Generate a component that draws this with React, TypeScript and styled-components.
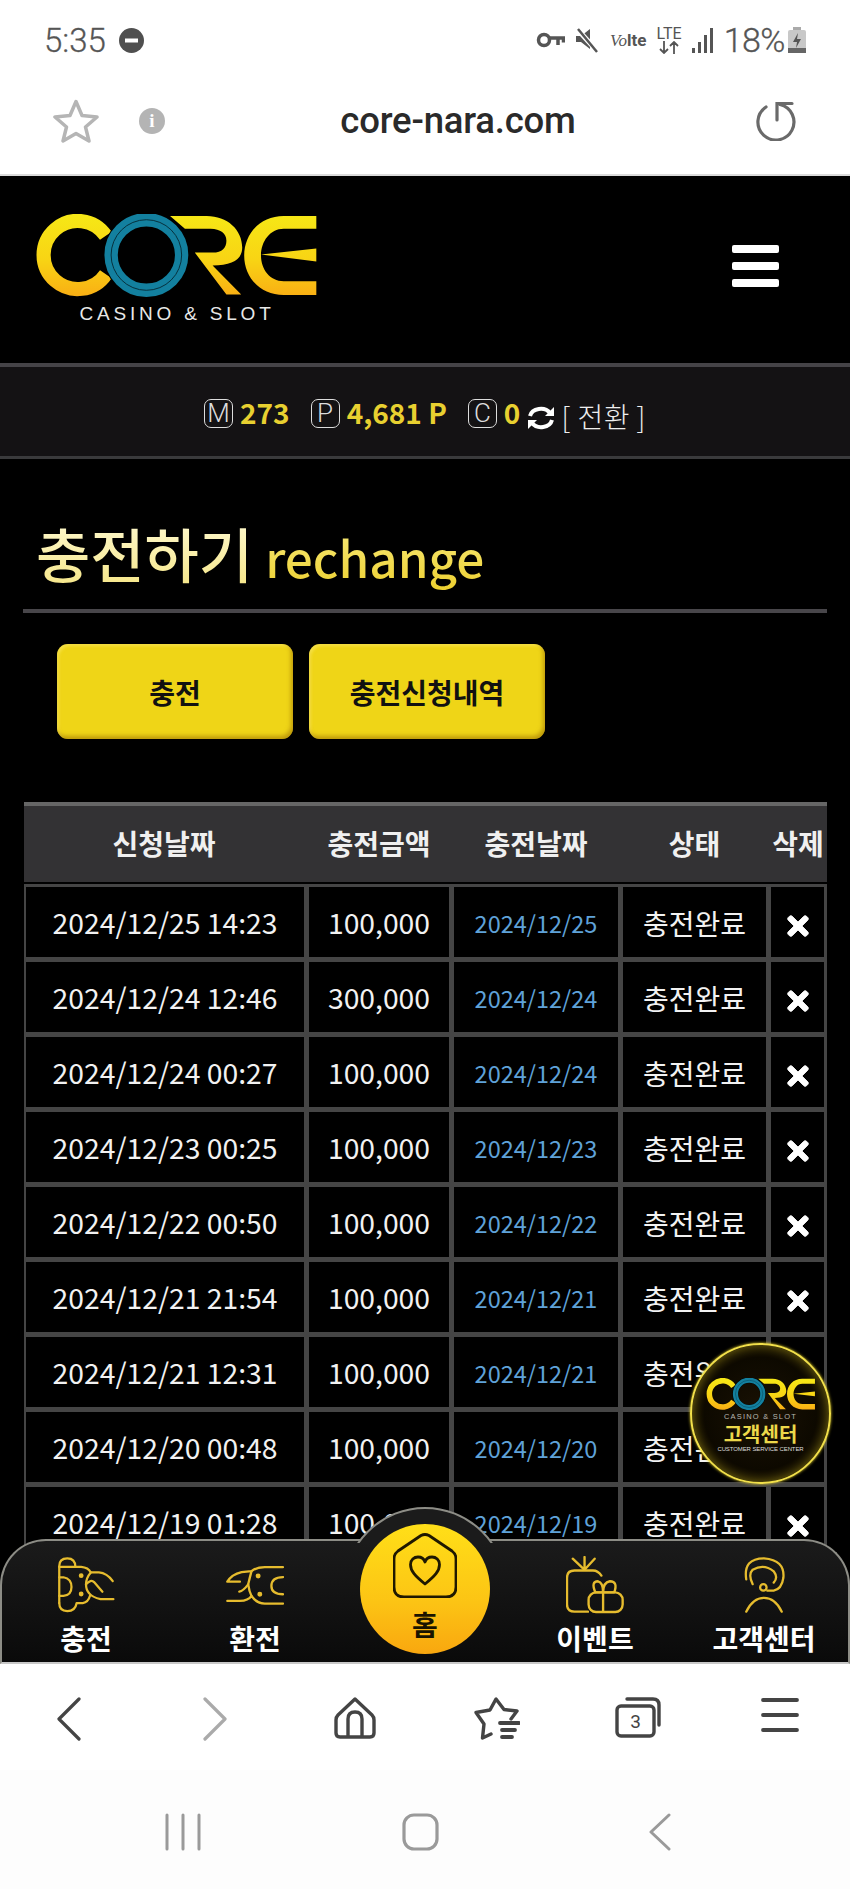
import React from "react";
import styled, { createGlobalStyle } from "styled-components";
import { FaTimes } from "react-icons/fa";

const Global = createGlobalStyle`
  html, body { margin: 0; padding: 0; background: #fff; }
  * { box-sizing: border-box; }
`;

const KR = `"Noto Sans CJK KR", "Noto Sans", sans-serif`;

const Screen = styled.div`
  width: 850px;
  height: 1889px;
  display: flex;
  flex-direction: column;
  overflow: hidden;
  font-family: ${KR};
  background: #fff;
`;

/* ---------- Android status bar ---------- */
const StatusBar = styled.div`
  height: 78px;
  flex: none;
  display: flex;
  align-items: center;
  justify-content: space-between;
  padding: 2px 44px 0 44px;
  color: #555;
  font-family: Roboto, sans-serif;
`;
const StatusGroup = styled.div`
  display: flex;
  align-items: center;
  gap: ${(p: { $gap?: number }) => p.$gap ?? 10}px;
`;
const Clock = styled.span`
  font-size: 33px;
  font-weight: 300;
  -webkit-text-stroke: 0.3px #555;
`;
const Battery = styled.span`
  font-size: 34px;
  font-weight: 300;
  letter-spacing: -0.5px;
  -webkit-text-stroke: 0.3px #555;
`;
const Volte = styled.span`
  font-size: 17px;
  font-family: "Liberation Serif", serif;
  font-style: italic;
  color: #555;
  white-space: nowrap;
  b { font-family: Roboto, sans-serif; font-style: normal; font-size: 17px; }
`;
const LteStack = styled.span`
  display: flex;
  flex-direction: column;
  align-items: center;
  font-size: 16px;
  line-height: 15px;
  color: #555;
  svg { display: block; }
`;

/* ---------- Browser address bar ---------- */
const AddressBar = styled.div`
  height: 98px;
  flex: none;
  display: flex;
  align-items: center;
  padding: 0 54px 10px 53px;
  border-bottom: 2px solid #dcdcdc;
`;
const InfoDot = styled.span`
  margin-left: 40px;
  width: 26px;
  height: 26px;
  border-radius: 50%;
  background: #b4b4b4;
  color: #fff;
  font: 700 19px/26px "Liberation Serif", serif;
  text-align: center;
`;
const Url = styled.div`
  flex: 1;
  text-align: center;
  font: 500 36.5px/1 Roboto, sans-serif;
  letter-spacing: -0.2px;
  color: #2a2a2a;
  padding-right: 2px;
`;

/* ---------- Site ---------- */
const Site = styled.div`
  flex: 1;
  position: relative;
  background: #000;
  overflow: hidden;
  min-height: 0;
`;
const SiteHeader = styled.header`
  height: 187px;
  display: flex;
  justify-content: space-between;
  align-items: flex-start;
  padding: 38px 71px 0 35px;
`;
const Brand = styled.div`
  display: flex;
  flex-direction: column;
  align-items: center;
  width: 284px;
`;
const BrandSub = styled.div`
  font: 400 ${(p: { $size: number; $space: number }) => p.$size}px/1 "Liberation Sans", sans-serif;
  letter-spacing: ${(p) => p.$space}px;
  color: ${(p) => (p.$size > 10 ? "#e8e8e8" : "#b8b8b0")};
  white-space: nowrap;
  margin-top: ${(p) => (p.$size > 10 ? 7 : 3)}px;
`;
const Burger = styled.div`
  margin-top: 31px;
  width: 47px;
  display: flex;
  flex-direction: column;
  gap: 9px;
  span { height: 8px; border-radius: 2px; background: #fff; }
`;
const BalanceBar = styled.div`
  height: 96px;
  border-top: 4px solid #454347;
  border-bottom: 3px solid #3a3a3c;
  background: #141214;
  display: flex;
  align-items: center;
  justify-content: center;
  padding-top: 3px;
`;
const Badge = styled.span`
  width: 29px;
  height: 29px;
  border: 1.5px solid #ddd;
  border-radius: 7px;
  color: #ddd;
  font: 300 26px/26px Roboto, sans-serif;
  text-align: center;
  flex: none;
  margin-left: ${(p: { $left: number }) => p.$left}px;
`;
const Amount = styled.span`
  font-size: 28px;
  font-weight: 700;
  line-height: 1;
  color: #e8d030;
  margin-left: 7px;
  white-space: nowrap;
  position: relative;
  top: -1px;
`;
const Swap = styled.span`
  display: flex;
  margin-left: 7px;
  margin-top: 9px;
`;
const SwapLabel = styled.span`
  font-size: 28px;
  font-weight: 300;
  line-height: 1;
  letter-spacing: 0.5px;
  color: #eee;
  margin-left: 6px;
  margin-top: 5px;
  white-space: pre;
`;
const PageTitle = styled.div`
  margin: 0 23px;
  height: 154px;
  padding: 51px 0 0 13px;
  border-bottom: 4px solid #48464a;
  display: flex;
  align-items: baseline;
  gap: 12px;
`;
const TitleKo = styled.span`
  font-size: 59px;
  font-weight: 500;
  line-height: 1.45;
  background: linear-gradient(180deg, #fffbd8, #f5e480);
  -webkit-background-clip: text;
  background-clip: text;
  color: transparent;
`;
const TitleEn = styled.span`
  font-size: 49.5px;
  font-weight: 500;
  line-height: 1.45;
  background: linear-gradient(180deg, #f8ec80, #edcf2c);
  -webkit-background-clip: text;
  background-clip: text;
  color: transparent;
`;
const Tabs = styled.div`
  display: flex;
  gap: 16px;
  padding: 31px 0 0 57px;
  height: 189px;
`;
const TabButton = styled.button`
  width: 236px;
  height: 95px;
  border: none;
  border-radius: 11px;
  background: #efd517;
  box-shadow: inset -2px -3px 4px rgba(150, 105, 0, 0.55), inset 2px 2px 3px rgba(255, 240, 120, 0.5);
  font: 700 28px/1 ${KR};
  color: #111;
`;

const TableWrap = styled.div`
  margin: 0 23px 0 24px;
  width: 803px;
`;
const HeadRow = styled.div`
  display: grid;
  grid-template-columns: 280px 140px 164px 143px 1fr;
  column-gap: 5px;
  height: 80px;
  background: #333234;
  border-top: 4px solid #666;
  padding-right: 2px;
`;
const HeadCell = styled.div`
  display: flex;
  align-items: center;
  justify-content: center;
  font-size: 28px;
  font-weight: 700;
  color: #f0f0f0;
  white-space: nowrap;
  padding-bottom: 2px;
`;
const Rows = styled.div`
  margin-top: 2px;
  background: #454545;
  padding: 3px 3px 0 2px;
  display: flex;
  flex-direction: column;
  gap: 5px;
  width: 803px;
`;
const Row = styled.div`
  display: grid;
  grid-template-columns: 278px 140px 164px 143px 1fr;
  column-gap: 5px;
  height: 70px;
`;
const Cell = styled.div`
  background: #000;
  display: flex;
  align-items: center;
  justify-content: center;
  font-size: ${(p: { $size?: number; $blue?: boolean; $drop?: number }) => p.$size ?? 28}px;
  color: ${(p) => (p.$blue ? "#5fa2d8" : "#f2f2f2")};
  padding-top: ${(p) => p.$drop ?? 1}px;
  white-space: nowrap;
  line-height: 1;
  svg { stroke: #fff; stroke-width: 16px; }
`;

/* ---------- Floating customer centre ---------- */
const Floating = styled.div`
  position: absolute;
  left: 690px;
  top: 1167px;
  width: 141px;
  height: 141px;
  border-radius: 50%;
  border: 2px solid #f2e04a;
  background: radial-gradient(circle, #1a1204 0%, #0d0900 58%, #2a2000 84%, #a08c14 96%, #e8d428 100%);
  box-shadow: 0 0 3px #e8d428, inset 0 0 12px rgba(230, 210, 40, 0.45);
  display: flex;
  flex-direction: column;
  align-items: center;
  padding-top: 33px;
`;
const FloatTitle = styled.div`
  font-size: 20px;
  font-weight: 700;
  line-height: 1;
  margin-top: 3px;
  color: #ecd84a;
`;
const FloatSub = styled.div`
  font: 400 6px/1 "Liberation Sans", sans-serif;
  letter-spacing: -0.1px;
  color: #ddd;
  margin-top: 2px;
  white-space: nowrap;
`;

/* ---------- Site bottom navigation ---------- */
const SiteNav = styled.nav`
  position: absolute;
  left: 0;
  right: 0;
  bottom: 0;
  height: 125px;
  border: 2px solid #8d8d86;
  border-bottom: 2px solid #c8c8c8;
  border-radius: 46px 46px 0 0;
  background: linear-gradient(180deg, #1b1b1b, #0a0a0a);
  display: grid;
  grid-template-columns: 168px 170px 170px 170px 168px;
  margin: 0;
`;
const Bump = styled.div`
  position: absolute;
  left: 343px;
  top: 1331px;
  width: 164px;
  height: 164px;
  border-radius: 50%;
  border: 2px solid #8d8d86;
  background: #1b1b1b;
  clip-path: inset(0 0 128px 0);
  z-index: 2;
`;
const HomeButton = styled.div`
  position: absolute;
  left: 360px;
  top: 1348px;
  width: 130px;
  height: 130px;
  border-radius: 50%;
  background: linear-gradient(180deg, #ffdf18 0%, #fcc414 60%, #f9a70f 100%);
  z-index: 3;
  display: flex;
  flex-direction: column;
  align-items: center;
  padding-top: 9px;
  color: #1a1400;
  font-size: 28px;
  font-weight: 700;
  line-height: 1;
`;
const HomeLabel = styled.span`
  margin-top: 12px;
`;
const NavItem = styled.div`
  display: flex;
  flex-direction: column;
  align-items: center;
  padding-top: 15px;
`;
const NavIcon = styled.div`
  height: 58px;
  display: flex;
  align-items: center;
  justify-content: center;
`;
const NavLabel = styled.div`
  font-size: 28px;
  font-weight: 700;
  line-height: 1;
  color: #fff;
  margin-top: 10px;
  white-space: nowrap;
`;

/* ---------- Browser toolbar + system nav ---------- */
const BrowserBar = styled.div`
  height: 106px;
  flex: none;
  display: flex;
  align-items: flex-start;
  padding-top: 33px;
  position: relative;
`;
const ToolSlot = styled.div`
  flex: none;
  display: flex;
  margin-left: ${(p: { $left: number }) => p.$left}px;
`;
const SystemBar = styled.div`
  height: 119px;
  flex: none;
  display: flex;
  align-items: flex-start;
  padding-top: 43px;
  background: #fdfdfd;
`;

/* ---------- Drawings ---------- */
const Logo = ({ id, width }: { id: string; width: number }) => (
  <svg width={width} height={(width * 83) / 284} viewBox="0 0 284 84" fill="none">
    <defs>
      <linearGradient id={id} x1="0" y1="0" x2="0" y2="84" gradientUnits="userSpaceOnUse">
        <stop offset="0" stopColor="#f6e816" />
        <stop offset="0.55" stopColor="#f8d414" />
        <stop offset="1" stopColor="#f9ae14" />
      </linearGradient>
    </defs>
    <path d="M70 22.100A34.500 34.500 0 1 0 70 60.900" stroke={`url(#${id})`} strokeWidth="14.300" />
    <path
      d="M135 2H172C193 2 208 16 208 34C208 46 198 52 178 52L207 81.500H192L160 39H178C188 39 192 34 192 27C192 20 186 15 176 15H150Z"
      fill={`url(#${id})`}
    />
    <path
      d="M283 2H250C226 2 210 20 210 42C210 64 226 82 250 82H283V68H250C236 68 227 56 227 42C227 28 236 15 250 15H283Z"
      fill={`url(#${id})`}
    />
    <path d="M227 41L283 35V48Z" fill={`url(#${id})`} />
    <circle cx="111" cy="41.500" r="36" stroke="#000" strokeWidth="15" />
    <circle cx="111" cy="41.500" r="35.700" stroke="#13809f" strokeWidth="13.500" />
    <circle cx="111" cy="41.500" r="35.700" stroke="#06303c" strokeWidth="1" />
  </svg>
);

const Stroke = { fill: "none", stroke: "#e6bc2e", strokeWidth: 7, strokeLinecap: "round" as const, strokeLinejoin: "round" as const };

const ChargeIcon = () => (
  <svg width="58" height="58" viewBox="165 195 180 178" {...Stroke}>
    <path d="M172 340V225Q172 201 197 201Q222 201 222 228" />
    <path d="M172 228H240Q262 230 270 245H295Q320 247 338 272" />
    <path d="M172 260H185Q210 265 210 290Q210 315 185 318H172" />
    <path d="M172 340Q172 365 197 365Q222 365 226 340H245Q262 338 268 316" />
    <path d="M255 282Q270 265 280 275L306 305" />
    <path d="M270 245Q255 262 255 282Q255 300 265 310Q275 322 300 328H340" />
    <circle cx="240" cy="255" r="4" fill="#e6bc2e" />
    <circle cx="240" cy="312" r="4" fill="#e6bc2e" />
  </svg>
);
const ExchangeIcon = () => (
  <svg width="58" height="40" viewBox="678 222 175 120" {...Stroke}>
    <path d="M850 228H795Q770 228 755 240L725 243Q695 250 682 272H720" />
    <path d="M682 330H720Q745 330 755 315Q770 338 795 338H850" />
    <path d="M850 258Q815 258 815 285Q815 310 850 310" />
    <path d="M755 240Q750 258 745 280Q730 300 718 302" />
    <path d="M745 280Q748 302 755 315" />
    <circle cx="775" cy="255" r="4" fill="#e6bc2e" />
    <circle cx="780" cy="310" r="4" fill="#e6bc2e" />
  </svg>
);
const GiftIcon = () => (
  <svg width="58" height="58" viewBox="425 197 172 172" {...Stroke}>
    <path d="M530 255Q520 240 505 240H450Q428 240 428 262V340Q428 362 450 362H490" />
    <path d="M445 205L480 238M480 200V238M510 205L480 238" />
    <rect x="492" y="305" width="101" height="58" rx="22" />
    <path d="M535 305V362" />
    <path d="M535 305H512Q498 272 520 272Q535 275 535 305Q535 275 555 272Q580 272 568 305H535" />
  </svg>
);
const SupportIcon = () => (
  <svg width="42" height="58" viewBox="955 195 130 175" {...Stroke}>
    <path d="M965 265Q955 200 1020 200Q1085 205 1080 260Q1075 295 1050 300H1030" />
    <path d="M985 280Q970 250 985 235Q1020 215 1050 240Q1065 260 1050 275" />
    <circle cx="1018" cy="290" r="10" />
    <path d="M965 365Q985 322 1020 322Q1055 322 1075 365" />
  </svg>
);
const HomeHeartIcon = () => (
  <svg width="64" height="65" viewBox="0 0 64 65" fill="none" stroke="#1f1800" strokeWidth="2.800" strokeLinejoin="round">
    <path d="M28 2.500Q32 0.500 36 2.500L59 18Q63 21 63 26V54Q63 64 53 64H11Q1 64 1 54V26Q1 21 5 18Z" />
    <path d="M32 51C22 43 17.500 38 17.500 31.500C17.500 27 21 24 25 24C28 24 31 26 32 29C33 26 36 24 39 24C43 24 46.500 27 46.500 31.500C46.500 38 42 43 32 51Z" />
  </svg>
);

const App = () => {
  const rows: [string, string, string][] = [
    ["2024/12/25 14:23", "100,000", "2024/12/25"],
    ["2024/12/24 12:46", "300,000", "2024/12/24"],
    ["2024/12/24 00:27", "100,000", "2024/12/24"],
    ["2024/12/23 00:25", "100,000", "2024/12/23"],
    ["2024/12/22 00:50", "100,000", "2024/12/22"],
    ["2024/12/21 21:54", "100,000", "2024/12/21"],
    ["2024/12/21 12:31", "100,000", "2024/12/21"],
    ["2024/12/20 00:48", "100,000", "2024/12/20"],
    ["2024/12/19 01:28", "100,000", "2024/12/19"],
  ];
  return (
    <Screen>
      <Global />
      <StatusBar>
        <StatusGroup $gap={13}>
          <Clock>5:35</Clock>
          <svg width="25" height="25" viewBox="0 0 25 25">
            <circle cx="12.500" cy="12.500" r="12.500" fill="#4f4f4f" />
            <rect x="6" y="10.500" width="13" height="4" fill="#fff" />
          </svg>
        </StatusGroup>
        <StatusGroup $gap={10}>
          <svg width="29" height="18" viewBox="0 0 29 18" fill="none" stroke="#555" strokeWidth="3.500">
            <circle cx="8" cy="9" r="5.500" />
            <path d="M14 7H27.500V11.500M22 8V14" />
          </svg>
          <svg width="25" height="27" viewBox="0 0 25 27" fill="#555">
            <path d="M1 9H6L15 2V22L6 15H1Z" />
            <path d="M3 3L23 25" stroke="#fff" strokeWidth="5" />
            <path d="M3 2L22 25" stroke="#555" strokeWidth="2.500" />
          </svg>
          <Volte>
            Vo<b>lte</b>
          </Volte>
          <LteStack>
            LTE
            <svg width="22" height="13" viewBox="0 0 22 13" fill="none" stroke="#555" strokeWidth="1.800">
              <path d="M6 0V12M2 8L6 12L10 8M16 13V1M12 5L16 1L20 5" />
            </svg>
          </LteStack>
          <svg width="22" height="25" viewBox="0 0 22 25" fill="#555">
            <rect x="0" y="20" width="3" height="5" />
            <rect x="6" y="14" width="3" height="11" />
            <rect x="12" y="7" width="3" height="18" />
            <rect x="18" y="0" width="3" height="25" />
          </svg>
          <StatusGroup $gap={3}>
            <Battery>18%</Battery>
            <svg width="18" height="26" viewBox="0 0 18 26">
              <rect x="5" y="0" width="8" height="3" fill="#aaa" />
              <rect x="0" y="3" width="18" height="23" rx="2" fill="#c8c8c8" />
              <rect x="0" y="21" width="18" height="5" fill="#666" />
              <path d="M10 6L5 15H9L8 21L13 12H9Z" fill="#555" />
            </svg>
          </StatusGroup>
        </StatusGroup>
      </StatusBar>

      <AddressBar>
        <svg width="46" height="44" viewBox="0 0 46 44" fill="none" stroke="#b5b5b5" strokeWidth="3.500" strokeLinejoin="round">
          <path d="M23 2.500L29 16.500L44 18L32.500 28L36 42L23 34.500L10 42L13.500 28L2 18L17 16.500Z" />
        </svg>
        <InfoDot>i</InfoDot>
        <Url>core-nara.com</Url>
        <svg width="43" height="40" viewBox="0 0 43 40" fill="none" stroke="#6a6a6a" strokeWidth="3.200" strokeLinecap="round">
          <path d="M13 6A18 18 0 1 0 27 3.500" />
          <path d="M24 19V2.500H39" />
        </svg>
      </AddressBar>

      <Site>
        <SiteHeader>
          <Brand>
            <Logo id="logoMain" width={284} />
            <BrandSub $size={19} $space={3.800}>CASINO &amp; SLOT</BrandSub>
          </Brand>
          <Burger>
            <span />
            <span />
            <span />
          </Burger>
        </SiteHeader>

        <BalanceBar>
          <Badge $left={0}>M</Badge>
          <Amount>273</Amount>
          <Badge $left={21}>P</Badge>
          <Amount>4,681 P</Amount>
          <Badge $left={21}>C</Badge>
          <Amount>0</Amount>
          <Swap>
            <svg width="28" height="26" viewBox="0 0 28 26" fill="none" stroke="#fff" strokeWidth="4">
              <path d="M3 11A11 9 0 0 1 23 8" />
              <path d="M25 15A11 9 0 0 1 5 18" />
              <path d="M27 2V11H18Z" fill="#fff" strokeWidth="0" />
              <path d="M1 24V15H10Z" fill="#fff" strokeWidth="0" />
            </svg>
          </Swap>
          <SwapLabel>[ 전환 ]</SwapLabel>
        </BalanceBar>

        <PageTitle>
          <TitleKo>충전하기</TitleKo>
          <TitleEn>rechange</TitleEn>
        </PageTitle>

        <Tabs>
          <TabButton>충전</TabButton>
          <TabButton>충전신청내역</TabButton>
        </Tabs>

        <TableWrap>
          <HeadRow>
            <HeadCell>신청날짜</HeadCell>
            <HeadCell>충전금액</HeadCell>
            <HeadCell>충전날짜</HeadCell>
            <HeadCell>상태</HeadCell>
            <HeadCell>삭제</HeadCell>
          </HeadRow>
          <Rows>
            {rows.map((r) => (
              <Row key={r[0]}>
                <Cell $size={28.300}>{r[0]}</Cell>
                <Cell $size={28.300}>{r[1]}</Cell>
                <Cell $size={23.500} $blue $drop={4}>
                  {r[2]}
                </Cell>
                <Cell>충전완료</Cell>
                <Cell $drop={8}>
                  <FaTimes size={30} color="#fff" />
                </Cell>
              </Row>
            ))}
          </Rows>
        </TableWrap>

        <Floating>
          <Logo id="logoBadge" width={110} />
          <BrandSub $size={7.500} $space={1.200}>CASINO &amp; SLOT</BrandSub>
          <FloatTitle>고객센터</FloatTitle>
          <FloatSub>CUSTOMER SERVICE CENTER</FloatSub>
        </Floating>

        <Bump />
        <SiteNav>
          <NavItem>
            <NavIcon>
              <ChargeIcon />
            </NavIcon>
            <NavLabel>충전</NavLabel>
          </NavItem>
          <NavItem>
            <NavIcon>
              <ExchangeIcon />
            </NavIcon>
            <NavLabel>환전</NavLabel>
          </NavItem>
          <NavItem />
          <NavItem>
            <NavIcon>
              <GiftIcon />
            </NavIcon>
            <NavLabel>이벤트</NavLabel>
          </NavItem>
          <NavItem>
            <NavIcon>
              <SupportIcon />
            </NavIcon>
            <NavLabel>고객센터</NavLabel>
          </NavItem>
        </SiteNav>
        <HomeButton>
          <HomeHeartIcon />
          <HomeLabel>홈</HomeLabel>
        </HomeButton>
      </Site>

      <BrowserBar>
        <ToolSlot $left={57}>
          <svg width="24" height="44" viewBox="0 0 24 44" fill="none" stroke="#444" strokeWidth="3.200" strokeLinecap="round" strokeLinejoin="round">
            <path d="M22 2L2 22L22 42" />
          </svg>
        </ToolSlot>
        <ToolSlot $left={122}>
          <svg width="24" height="44" viewBox="0 0 24 44" fill="none" stroke="#aaa" strokeWidth="3.200" strokeLinecap="round" strokeLinejoin="round">
            <path d="M2 2L22 22L2 42" />
          </svg>
        </ToolSlot>
        <ToolSlot $left={107}>
          <svg width="42" height="42" viewBox="0 0 42 42" fill="none" stroke="#444" strokeWidth="3.400" strokeLinejoin="round">
            <path d="M21 2L38 18Q40 20 40 23V36Q40 40 36 40H6Q2 40 2 36V23Q2 20 4 18Z" />
            <path d="M14 40V22Q14 15 21 15Q28 15 28 22V40" />
          </svg>
        </ToolSlot>
        <ToolSlot $left={98}>
          <svg width="46" height="43" viewBox="0 0 46 43" fill="none" stroke="#444" strokeWidth="3.400" strokeLinecap="round" strokeLinejoin="round">
            <path d="M37 22L43 14L30 12.500L22 2L16 13L2 15.500L10 27L8.500 41L17 37" />
            <path d="M26 26H45M28 33H41M28 40H38" strokeWidth="3.800" />
          </svg>
        </ToolSlot>
        <ToolSlot $left={95}>
          <svg width="46" height="41" viewBox="0 0 46 41" fill="none" stroke="#444" strokeWidth="3.400" strokeLinecap="round" strokeLinejoin="round">
            <rect x="2" y="9" width="37" height="30" rx="4" />
            <path d="M12 2H38Q44 2 44 8V28" />
            <text x="20.500" y="31" fontSize="19" fontFamily="Roboto, sans-serif" fill="#444" stroke="none" textAnchor="middle">
              3
            </text>
          </svg>
        </ToolSlot>
        <ToolSlot $left={100}>
          <svg width="38" height="36" viewBox="0 0 38 36" fill="none" stroke="#444" strokeWidth="3.800" strokeLinecap="round">
            <path d="M2 3H36M2 18H36M2 33H36" />
          </svg>
        </ToolSlot>
      </BrowserBar>
      <SystemBar>
        <ToolSlot $left={165}>
          <svg width="36" height="38" viewBox="0 0 36 38" fill="none" stroke="#9a9a9a" strokeWidth="3" strokeLinecap="round">
            <path d="M2 2V36M18 2V36M34 2V36" />
          </svg>
        </ToolSlot>
        <ToolSlot $left={201}>
          <svg width="37" height="38" viewBox="0 0 37 38" fill="none" stroke="#9a9a9a" strokeWidth="3.200">
            <rect x="2" y="2" width="33" height="34" rx="10" />
          </svg>
        </ToolSlot>
        <ToolSlot $left={210}>
          <svg width="22" height="38" viewBox="0 0 22 38" fill="none" stroke="#9a9a9a" strokeWidth="3" strokeLinecap="round" strokeLinejoin="round">
            <path d="M20 2L2 19L20 36" />
          </svg>
        </ToolSlot>
      </SystemBar>
    </Screen>
  );
};

export default App;
